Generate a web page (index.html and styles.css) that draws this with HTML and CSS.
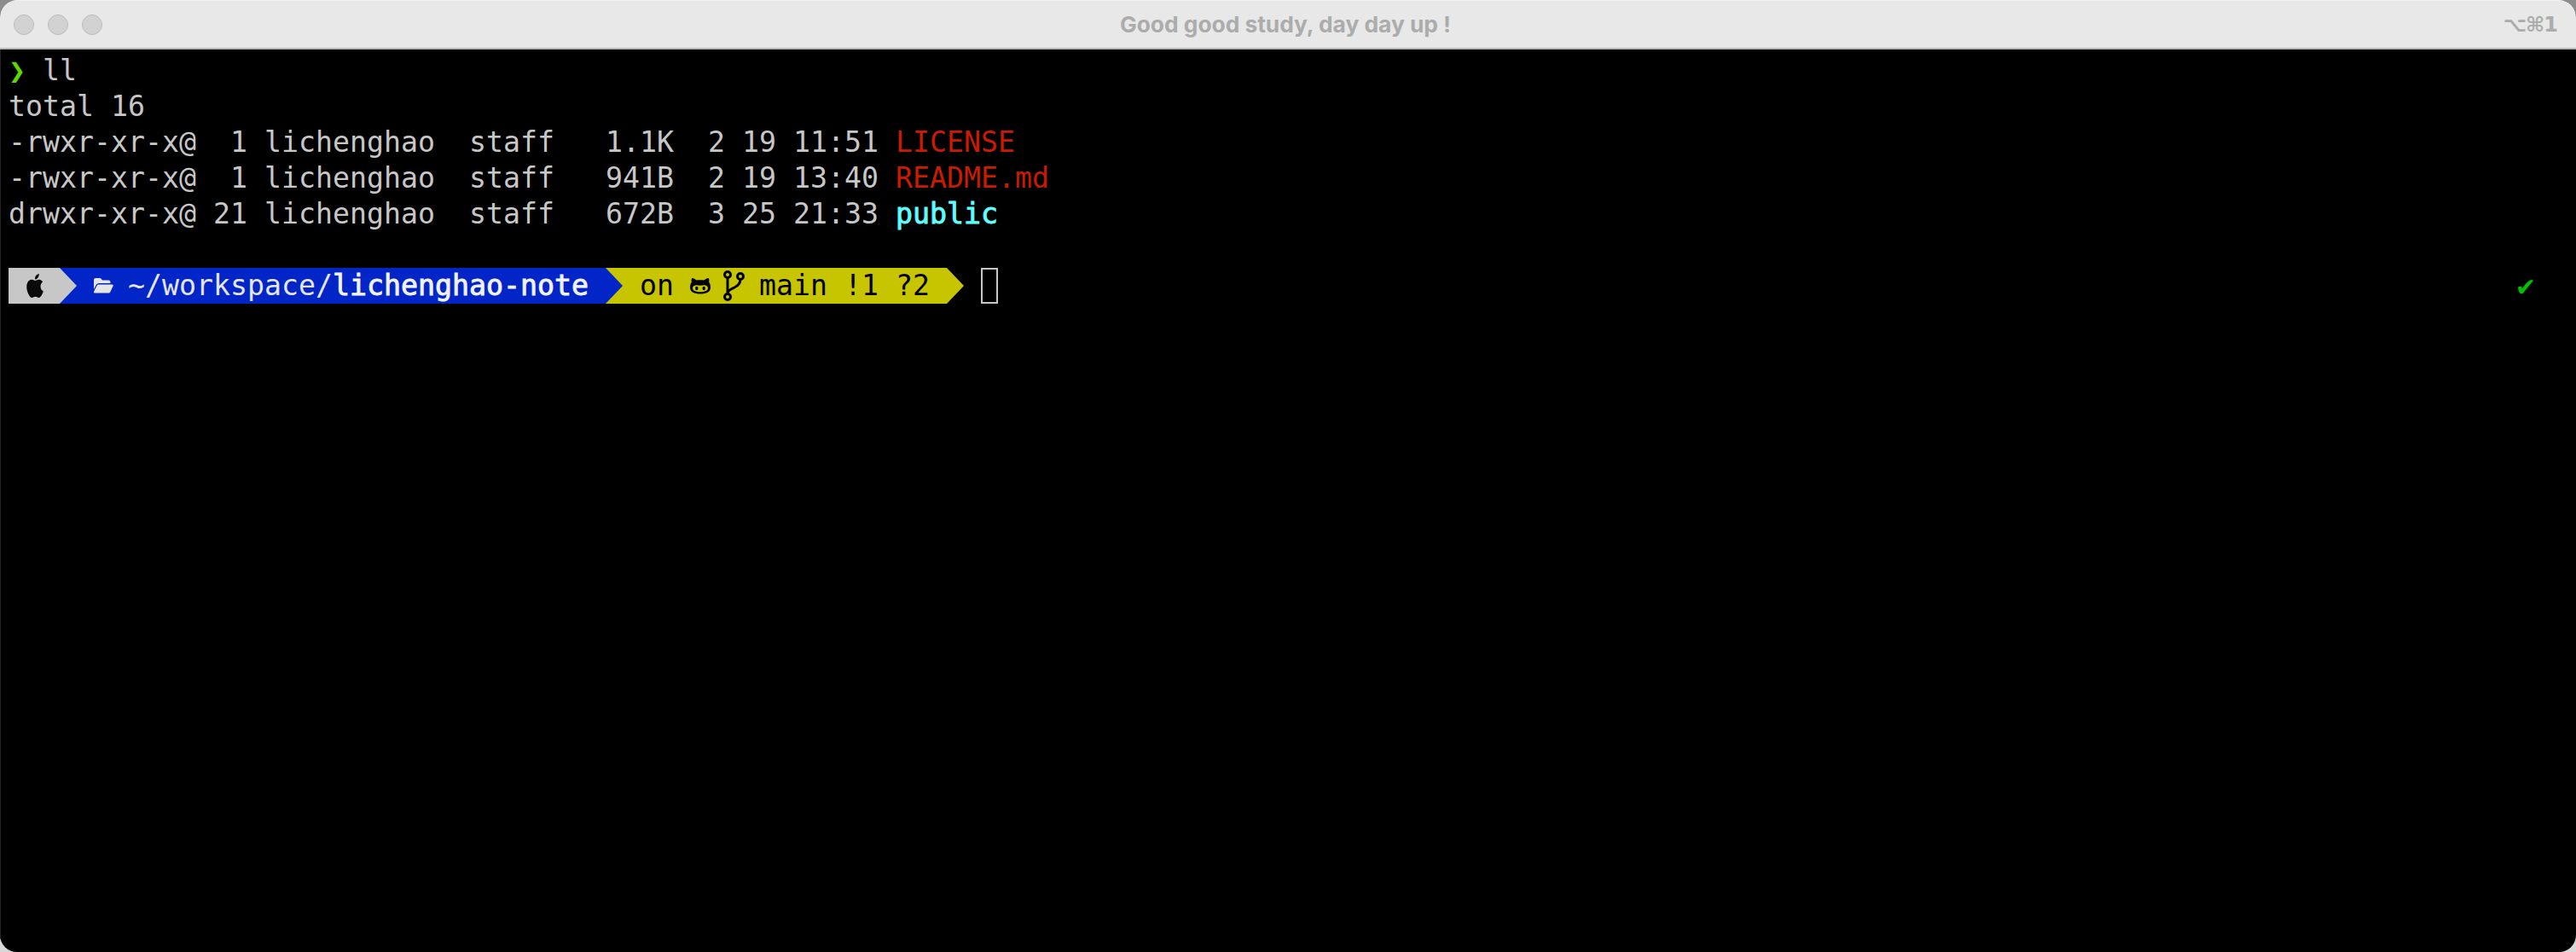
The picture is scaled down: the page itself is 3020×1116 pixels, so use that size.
FILE: index.html
```html
<!DOCTYPE html>
<html lang="en">
<head>
<meta charset="utf-8">
<title>Good good study, day day up !</title>
<link rel="stylesheet" href="styles.css">
</head>
<body>
<div class="window">
  <header class="titlebar">
    <div class="lights"><span class="light"></span><span class="light"></span><span class="light"></span></div>
    <div class="title">Good good study, day day up !</div>
    <div class="shortcut">⌥⌘1</div>
  </header>
  <main class="term">
    <pre class="line"><span class="arrow">❯</span> ll</pre>
    <pre class="line">total 16</pre>
    <pre class="line">-rwxr-xr-x@  1 lichenghao  staff   1.1K  2 19 11:51 <span class="red">LICENSE</span></pre>
    <pre class="line">-rwxr-xr-x@  1 lichenghao  staff   941B  2 19 13:40 <span class="red">README.md</span></pre>
    <pre class="line">drwxr-xr-x@ 21 lichenghao  staff   672B  3 25 21:33 <span class="cyan">public</span></pre>
    <pre class="line"> </pre>
    <div class="prompt">
      <div class="seg seg-gray">
        <svg class="apple" viewBox="0 0 24 24" preserveAspectRatio="none"><path d="M12.152 6.896c-.948 0-2.415-1.078-3.96-1.04-2.04.027-3.91 1.183-4.961 3.014-2.117 3.675-.546 9.103 1.519 12.09 1.013 1.454 2.208 3.09 3.792 3.039 1.52-.065 2.09-.987 3.935-.987 1.831 0 2.35.987 3.96.948 1.637-.026 2.676-1.48 3.676-2.948 1.156-1.688 1.636-3.325 1.662-3.415-.039-.013-3.182-1.221-3.22-4.857-.026-3.04 2.48-4.494 2.597-4.559-1.429-2.09-3.623-2.324-4.39-2.376-2-.156-3.675 1.09-4.61 1.09zM15.53 3.83c.843-1.012 1.4-2.427 1.245-3.83-1.207.052-2.662.805-3.532 1.818-.78.896-1.454 2.338-1.273 3.714 1.338.104 2.715-.688 3.559-1.701"/></svg>
      </div>
      <div class="sep sep-gray"></div>
      <div class="seg seg-blue">
        <svg class="folder" viewBox="0 0 24 20"><path d="M1 3.2C1 2 1.9 1 3.1 1h5.6l2.400 2.600h7.200c1.200 0 2.100.9 2.100 2.100V7H7.200C5.700 7 4.400 7.800 3.700 9.100L1 14.200z"/><path d="M6.800 8.600h15.600c1 0 1.600 1 1.100 1.900l-3.200 6.700c-.4.9-1.200 1.400-2.200 1.400H2.200c-1 0-1.600-1-1.100-1.900l3.400-6.700c.5-.9 1.300-1.400 2.300-1.400z"/></svg>
        <pre class="seg-text"> ~/workspace/<b class="strong">lichenghao-note</b> </pre>
      </div>
      <div class="sep sep-blue"></div>
      <div class="seg seg-yellow">
        <pre class="seg-text"> on </pre>
        <svg class="cat" viewBox="0 0 24 20"><path d="M2.200 1c1.900.2 4 1.200 5.500 2.600 2.800-.6 5.800-.6 8.600 0C17.800 2.200 19.900 1.200 21.800 1c.6 1.400.7 3.200.4 4.800 1.200 1.500 1.800 3.600 1.800 6.200 0 5.400-5 7.500-12 7.500S0 17.400 0 12c0-2.600.6-4.700 1.800-6.200C1.500 4.200 1.600 2.400 2.200 1z"/><path class="cat-face" d="M3 12.500c0-2 2-3.300 4.600-3.300 1.500 0 3 .5 4.400.5s2.900-.5 4.400-.5c2.600 0 4.600 1.300 4.600 3.300 0 3.300-3.600 4.700-9 4.700s-9-1.400-9-4.700z"/><ellipse cx="7.800" cy="13" rx="1.700" ry="2.300"/><ellipse cx="16.200" cy="13" rx="1.700" ry="2.300"/></svg>
        <svg class="branch" viewBox="0 0 22 34"><g fill="none" stroke="#000" stroke-width="3"><circle cx="5" cy="4" r="3.500"/><circle cx="20" cy="6" r="3.500"/><circle cx="5" cy="30" r="3.500"/><path d="M5 7.500V26.500M20 9.500c0 5-3 7.500-7 9.500-4 1.800-7.200 3-8 6.500"/></g></svg>
        <pre class="seg-text"> main !1 ?2 </pre>
      </div>
      <div class="sep sep-yellow"></div>
      <div class="cursor"></div>
      <div class="status">✔</div>
    </div>
  </main>
</div>
</body>
</html>
```

FILE: styles.css
```css
* { box-sizing: border-box; }
html, body { margin: 0; height: 100%; }
body { background: linear-gradient(180deg, #8c8c8c 0%, #d8d8d8 100%); overflow: hidden; }
.window {
  width: 3020px; height: 1116px; display: flex; flex-direction: column;
  border-radius: 20px; overflow: hidden; background: #000;
}
.titlebar {
  flex: 0 0 58px; display: grid; grid-template-columns: 1fr auto 1fr; align-items: center;
  background: #e8e8e8; border-top: 1px solid #f2f2f2; border-bottom: 2px solid #b9b9b9;
  padding: 0 22px 0 16px;
}
.lights { display: flex; gap: 16px; }
.light { width: 24px; height: 24px; border-radius: 50%; background: #d2d2d2; border: 1px solid #bcbcbc; }
.title { color: #acacac; font: 700 26.3px "Inter", sans-serif; }
.shortcut { justify-self: end; color: #acacac; font: 700 24px "DejaVu Sans", sans-serif; letter-spacing: -1px; }
.term {
  flex: 1; padding: 4px 0 0 9px; color: #c7c7c7; border-left: 1px solid #222;
  font: 33.22px/42px "DejaVu Sans Mono", monospace;
}
.line, .seg-text { margin: 0; font: inherit; white-space: pre; }
.line { height: 42px; }
.arrow { color: #5fd700; font-weight: 700; }
.red { color: #c91b00; }
.cyan { color: #60fdff; -webkit-text-stroke: 0.9px #60fdff; }
.strong { color: #f2f2f2; font-weight: 400; -webkit-text-stroke: 0.9px #f2f2f2; }
.prompt { display: flex; height: 42px; align-items: stretch; padding-right: 49px; }
.seg { display: flex; align-items: center; }
.seg-gray { width: 60px; background: #c7c7c7; justify-content: center; }
.seg-blue { background: #0225c7; color: #e5e5e5; padding-left: 20px; width: 620px; }
.seg-yellow { background: #c7c400; color: #000; width: 380px; }
.apple { width: 24px; height: 28px; fill: #0a0a0a; margin-left: 1px; }
.folder { width: 24px; height: 20px; fill: #e5e5e5; margin-left: -1px; margin-right: -3px; flex: none; }
.cat { width: 24px; height: 20px; fill: #000; margin-left: -1px; flex: none; }
.cat-face { fill: #c7c400; }
.branch { width: 22px; height: 34px; margin-left: 15px; flex: none; overflow: visible; }
.sep { width: 20px; flex: none; }
.sep::before { content: ""; display: block; height: 100%; clip-path: polygon(0 0, 100% 50%, 0 100%); }
.sep-gray { background: #0225c7; }
.sep-gray::before { background: #c7c7c7; }
.sep-blue { background: #c7c400; }
.sep-blue::before { background: #0225c7; }
.sep-yellow { background: #000; }
.sep-yellow::before { background: #c7c400; }
.cursor { width: 20px; margin-left: 20px; border: 2px solid #c7c7c7; }
.status { margin-left: auto; color: #00c200; }
```
